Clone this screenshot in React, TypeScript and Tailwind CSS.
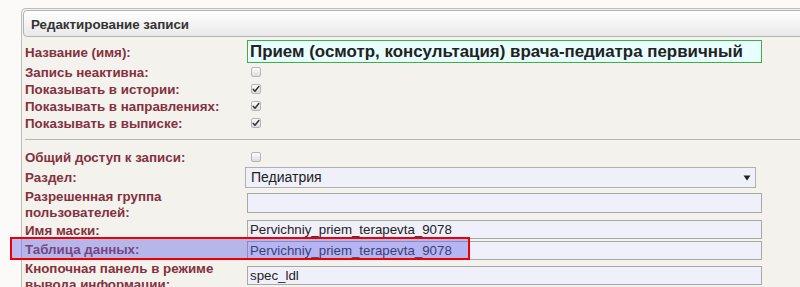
import React from "react";

const font = { fontFamily: '"Liberation Sans", Arial, sans-serif' };

function Check({ checked }: { checked?: boolean }) {
  return (
    <div className="w-[10px] h-[10px] rounded-[2px] border border-[#b4b4b4] bg-gradient-to-b from-[#fdfdfd] to-[#dcdcdc] flex items-center justify-center">
      {checked && (
        <svg width="8" height="8" viewBox="0 0 8 8">
          <path d="M1.3 4.4 L3 6.2 L6.8 1.6" fill="none" stroke="#333" strokeWidth="1.5" strokeLinecap="round" strokeLinejoin="round" />
        </svg>
      )}
    </div>
  );
}

const labelCls = "w-[222px] shrink-0 pl-[2px] text-[13.33px] leading-[16px] font-bold text-[#84303f] whitespace-nowrap";
const inputCls = "w-[515px] border border-[#a8a8a8] bg-[#f0f0fb] text-[13.3px] text-[#222] pl-[2px] flex items-center";

export default function App() {
  return (
    <div className="relative w-[800px] h-[287px] overflow-hidden bg-[#fbfaf8]" style={font}>
      <div className="ml-[21px] mt-[8px] w-[800px] h-[300px] border-l border-t border-[#bdbdbd] rounded-tl-[5px] bg-[#f3f2ec] pt-[1px] pl-[1px]">
        <div className="h-[27px] border border-[#b3b3b3] rounded-[4px] bg-gradient-to-b from-[#ffffff] to-[#e9e9e9] flex items-center pl-[7px] pt-[2px] text-[13.33px] font-bold text-[#333]">
          Редактирование записи
        </div>

        {/* Name row */}
        <div className="flex h-[27px]">
          <div className={labelCls + " pt-[8px]"}>Название (имя):</div>
          <div className="mt-[3px] ml-[2px] w-[515px] h-[23px] border border-[#3cb043] bg-[#e8ffff] pl-[2px] flex items-center text-[16.9px] font-bold text-[#222] whitespace-nowrap">
            Прием (осмотр, консультация) врача-педиатра первичный
          </div>
        </div>

        {[
          ["Запись неактивна:", false],
          ["Показывать в истории:", true],
          ["Показывать в направлениях:", true],
          ["Показывать в выписке:", true],
        ].map(([l, c]) => (
          <div key={l as string} className="flex h-[17px]">
            <div className={labelCls + " pt-[1px]"}>{l as string}</div>
            <div className="ml-[6px] pt-[3px]">
              <Check checked={c as boolean} />
            </div>
          </div>
        ))}

        <div className="mt-[7px] ml-[2px] h-[1px] bg-[#b8b8b8]" />

        <div className="flex h-[26px]">
          <div className={labelCls + " pt-[10px]"}>Общий доступ к записи:</div>
          <div className="ml-[6px] pt-[12px]">
            <Check />
          </div>
        </div>

        <div className="flex h-[22px]">
          <div className={labelCls + " pt-[4px]"}>Раздел:</div>
          <div className="mt-[1px] w-[511px] h-[21px] border border-[#b0b0b0] bg-[#f0f0fb] text-[14px] text-[#222] pl-[5px] pr-[4px] flex items-center justify-between">
            <span>Педиатрия</span>
            <svg width="8" height="6" viewBox="0 0 8 6">
              <path d="M0.5 0.5 H7.5 L4 5.5 Z" fill="#222" />
            </svg>
          </div>
        </div>

        <div className="flex h-[32px]">
          <div className={labelCls + " pt-[1px]"}>
            Разрешенная группа
            <br />
            пользователей:
          </div>
          <div className={inputCls + " ml-[2px] mt-[5px] h-[20px]"}></div>
        </div>

        <div className="flex h-[19px]">
          <div className={labelCls + " pt-[3px]"}>Имя маски:</div>
          <div className={inputCls + " ml-[2px] h-[19px]"}>Pervichniy_priem_terapevta_9078</div>
        </div>

        <div className="flex h-[21px]">
          <div className={labelCls + " pt-[3px]"}>Таблица данных:</div>
          <div className={inputCls + " ml-[2px] mt-[2px] h-[19px]"}>Pervichniy_priem_terapevta_9078</div>
        </div>

        <div className="flex h-[40px]">
          <div className={labelCls + " pt-[1px]"}>
            Кнопочная панель в режиме
            <br />
            вывода информации:
          </div>
          <div className={inputCls + " ml-[2px] mt-[6px] h-[19px]"}>spec_ldl</div>
        </div>
      </div>

      {/* annotation highlight */}
      <div className="absolute left-[10px] top-[237px] w-[460px] h-[23px] border-2 border-[#ee0000] bg-[rgba(100,100,230,0.42)]" />
    </div>
  );
}
